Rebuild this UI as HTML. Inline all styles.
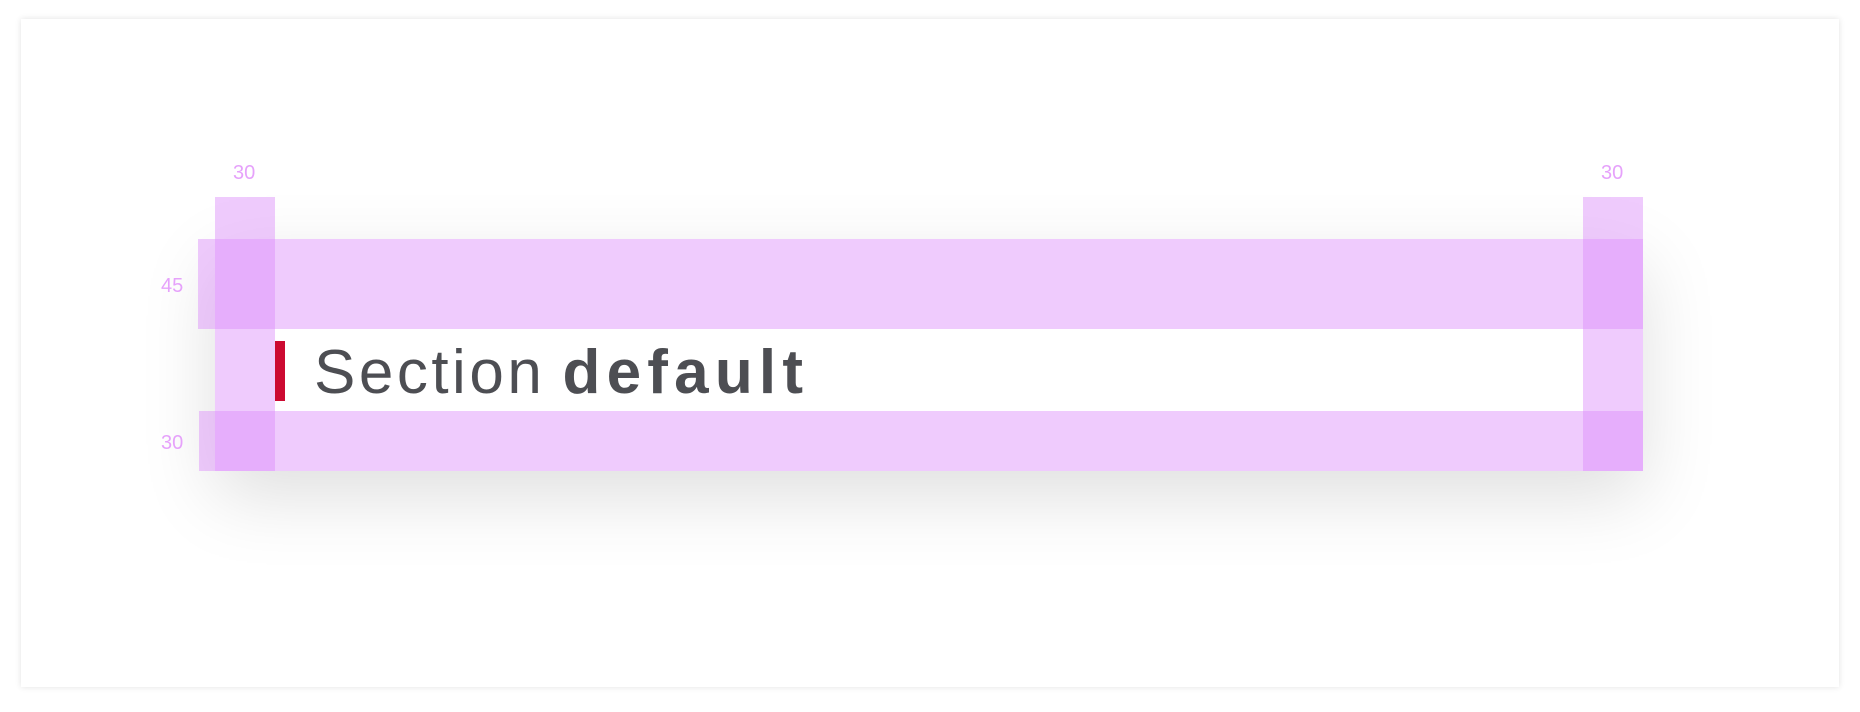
<!DOCTYPE html>
<html><head><style>
html,body{margin:0;padding:0;width:1860px;height:712px;background:#fff;overflow:hidden;font-family:"Liberation Sans",sans-serif}
.card{position:absolute;left:21px;top:19px;width:1818px;height:668px;background:#fff;box-shadow:0 0 6px rgba(0,0,0,.12)}
.sec{position:absolute;left:215px;top:239px;width:1428px;height:232px;background:#fff;box-shadow:0 25px 70px rgba(0,0,0,.13)}
.b{position:absolute;background:rgba(220,140,250,.45)}
.lbl{position:absolute;color:#e6a2fb;font-size:20px}
.red{position:absolute;left:275px;top:341px;width:10px;height:60px;background:#cc0a31}
.t{position:absolute;left:314px;top:338px;font-size:62px;line-height:70px;color:#4d4e53;white-space:nowrap}
.t .l{letter-spacing:3.5px}
.t .d{font-weight:bold;letter-spacing:6.2px}
</style></head><body>
<div class="card"></div>
<div class="sec"></div>
<div class="b" style="left:198px;top:239px;width:1445px;height:90px"></div>
<div class="b" style="left:199px;top:411px;width:1444px;height:60px"></div>
<div class="b" style="left:215px;top:197px;width:60px;height:274px"></div>
<div class="b" style="left:1583px;top:197px;width:60px;height:274px"></div>
<div class="red"></div>
<div class="t"><span class="l">Section</span> <span class="d">default</span></div>
<div class="lbl" style="left:233px;top:162px">30</div>
<div class="lbl" style="left:1601px;top:162px">30</div>
<div class="lbl" style="left:161px;top:275px">45</div>
<div class="lbl" style="left:161px;top:432px">30</div>
</body></html>
